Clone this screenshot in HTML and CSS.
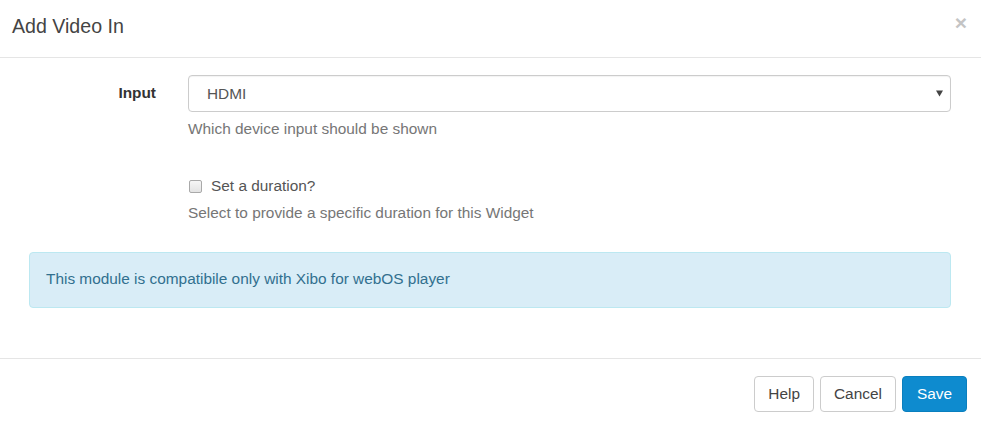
FILE: index.html
```html
<!DOCTYPE html>
<html lang="en">
<head>
<meta charset="utf-8">
<title>Add Video In</title>
<link rel="stylesheet" href="styles.css">
</head>
<body>
<div class="modal">
  <header class="modal-header">
    <h4 class="modal-title">Add Video In</h4>
    <button class="close" type="button" aria-label="Close">×</button>
  </header>
  <div class="modal-body">
    <div class="form-row">
      <label class="control-label" for="input">Input</label>
      <div class="control">
        <div class="select-wrap">
          <select id="input" class="form-control">
            <option>HDMI</option>
          </select>
          <svg class="caret" width="7" height="7" viewBox="0 0 7 7" aria-hidden="true">
            <path d="M0 0.5 H7 L3.5 6.5 Z" fill="#444"/>
          </svg>
        </div>
        <p class="help">Which device input should be shown</p>
      </div>
    </div>
    <div class="form-row row-check">
      <div></div>
      <div class="control">
        <label class="check"><input type="checkbox" class="box">Set a duration?</label>
        <p class="help help-tight">Select to provide a specific duration for this Widget</p>
      </div>
    </div>
    <div class="alert">This module is compatibile only with Xibo for webOS player</div>
  </div>
  <footer class="modal-footer">
    <button class="btn" type="button">Help</button>
    <button class="btn" type="button">Cancel</button>
    <button class="btn btn-primary" type="button">Save</button>
  </footer>
</div>
</body>
</html>
```
FILE: styles.css
```css
* { box-sizing: border-box; }
html, body {
  margin: 0;
  padding: 0;
  background: #fff;
}
body {
  font-family: "Liberation Sans", Arial, sans-serif;
  font-size: 15.4px;
  line-height: 22px;
  color: #555;
}
.modal {
  width: 981px;
  min-height: 425px;
  display: flex;
  flex-direction: column;
}
.modal-header {
  height: 58px;
  border-bottom: 1px solid #e5e5e5;
  display: flex;
  justify-content: space-between;
  align-items: flex-start;
  padding: 12px 14px 0 12px;
}
.modal-title {
  margin: 0;
  font-size: 19.6px;
  line-height: 28px;
  font-weight: normal;
  color: #444;
}
.close {
  border: 0;
  background: transparent;
  padding: 0;
  margin-top: 0;
  font-family: "Liberation Sans", Arial, sans-serif;
  font-size: 21px;
  line-height: 21px;
  font-weight: bold;
  color: #c4c4c4;
}
.modal-body {
  padding: 17px 30px 50px 29px;
}
.form-row {
  display: grid;
  grid-template-columns: 127px 1fr;
  column-gap: 32px;
}
.control-label {
  padding-top: 7px;
  text-align: right;
  font-weight: bold;
  color: #333;
}
.select-wrap {
  position: relative;
}
.form-control {
  display: block;
  width: 100%;
  height: 37px;
  margin: 0;
  padding: 0 30px 0 18px;
  border: 1px solid #ccc;
  border-radius: 4px;
  background: #fff;
  font-family: "Liberation Sans", Arial, sans-serif;
  font-size: 15.4px;
  color: #555;
  -webkit-appearance: none;
  appearance: none;
  box-shadow: inset 0 1px 1px rgba(0,0,0,.05);
}
.caret {
  position: absolute;
  right: 8px;
  top: 15px;
}
.help {
  margin: 6px 0 0;
  color: #767676;
}
.help-tight {
  margin-top: 5px;
}
.row-check {
  margin-top: 35px;
}
.check {
  display: flex;
  align-items: center;
  gap: 9px;
  color: #555;
}
.box {
  -webkit-appearance: none;
  appearance: none;
  width: 13px;
  height: 13px;
  margin: 0 0 0 1px;
  border: 1px solid #a9a9a9;
  border-radius: 2px;
  background: linear-gradient(#f6f6f6, #e3e3e3);
}
.alert {
  margin-top: 28px;
  padding: 15px 17px 17px 16px;
  border: 1px solid #bce8f1;
  border-radius: 4px;
  background: #d9edf7;
  color: #31708f;
}
.modal-footer {
  border-top: 1px solid #e5e5e5;
  padding: 17px 14px 13px;
  display: flex;
  justify-content: flex-end;
  gap: 6px;
}
.btn {
  height: 36px;
  padding: 0 13px;
  border: 1px solid #ccc;
  border-radius: 4px;
  background: #fff;
  font-family: "Liberation Sans", Arial, sans-serif;
  font-size: 15.4px;
  color: #444;
}
.btn-primary {
  background: #0e8bcf;
  border-color: #0a7fbe;
  color: #fff;
  padding: 0 14px;
}
```
